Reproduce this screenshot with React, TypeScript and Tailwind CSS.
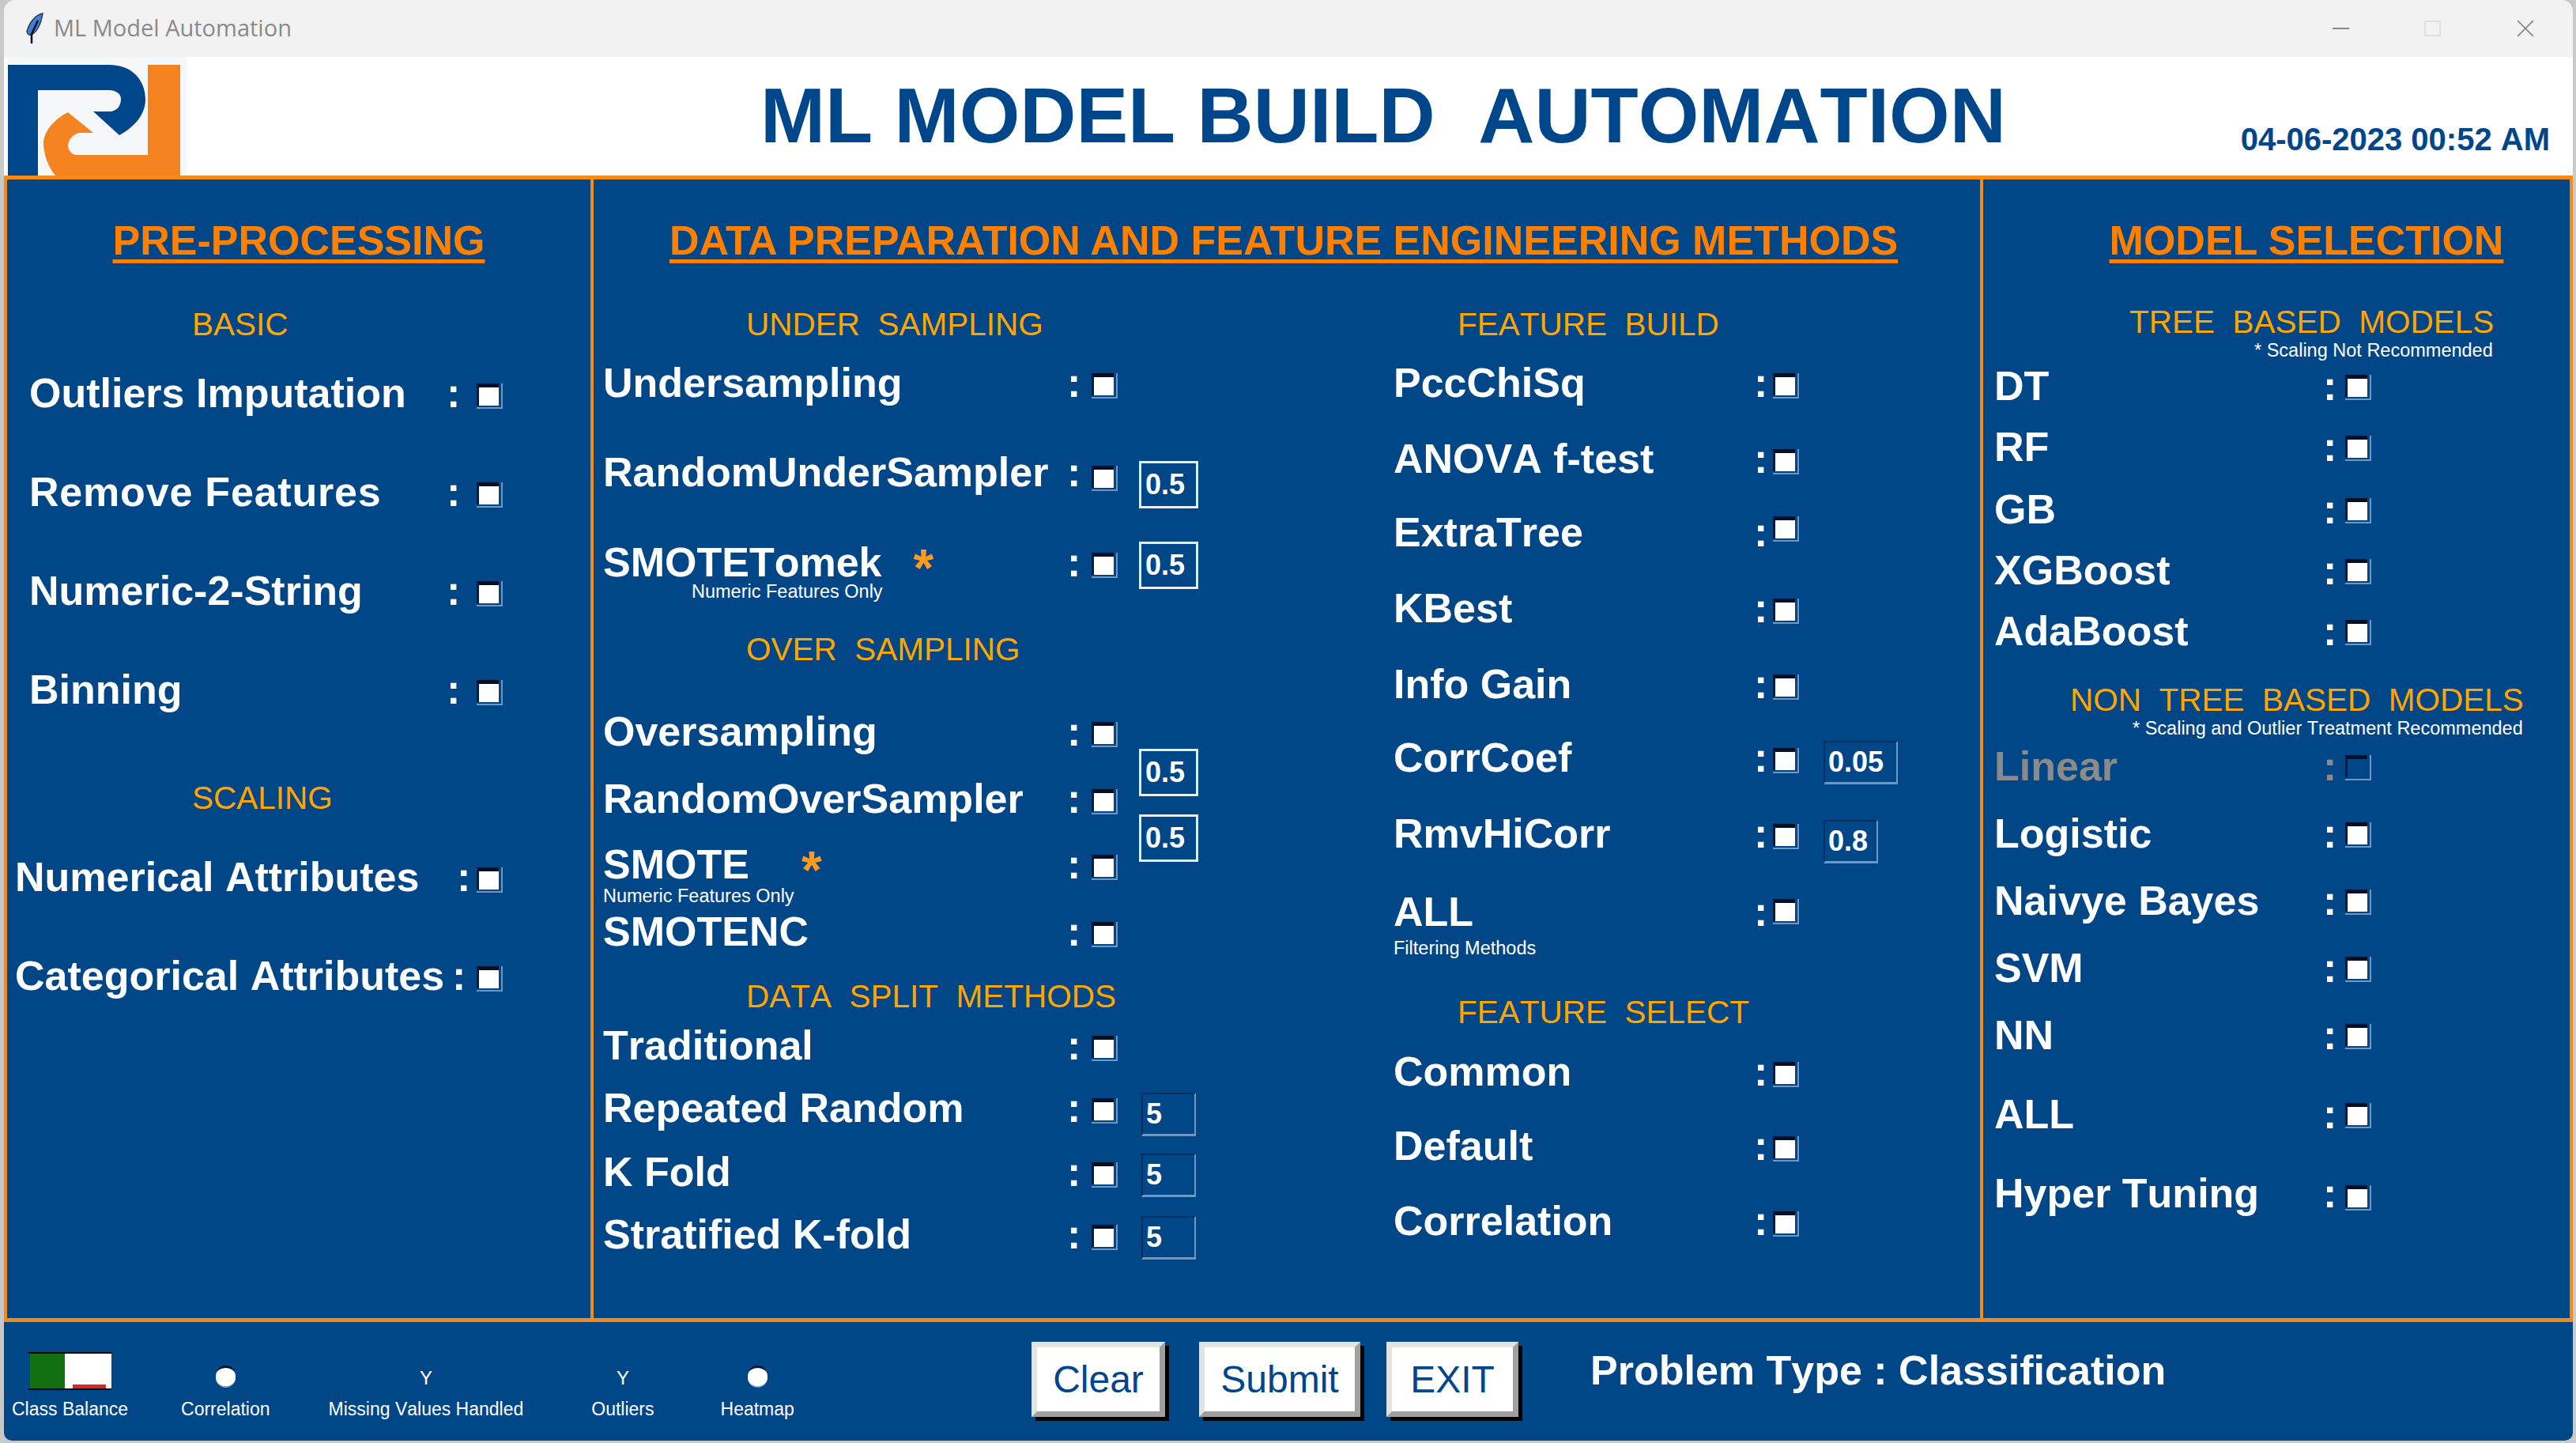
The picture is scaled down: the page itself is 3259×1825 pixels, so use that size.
import type { ReactNode } from "react";

const preLabel = "ml-[28px] w-[528px]";
const sampleLabel = "ml-[12px] w-[587px]";
const featureLabel = "ml-[12px] w-[456px]";
const modelLabel = "ml-[14px] w-[416px]";

const sampleCheck = "ml-[14px]";
const featureCheck = "ml-[7px]";
const modelCheck = "ml-[11px]";

const Check = ({ className, disabled }: { className?: string; disabled?: boolean }) => (
  <div className={`h-[32px] w-[33px] shrink-0 border-r-2 border-b-2 border-[#6f97c4] ${className ?? ""}`}>
    <div
      className={`h-[28px] w-[28px] border-t-[5px] border-l-[3px] border-t-[#020f24] border-l-[#021a3a] ${disabled ? "" : "bg-white"}`}
    />
  </div>
);

const BoxInput = ({ value, className }: { value: string; className?: string }) => (
  <div
    className={`flex h-[60px] w-[75px] shrink-0 items-center border-[3px] border-[#e8eef6] pl-[5px] text-[36px] font-bold text-white ${className ?? ""}`}
  >
    {value}
  </div>
);

const SunkenInput = ({ value, className }: { value: string; className?: string }) => (
  <div
    className={`flex h-[55px] shrink-0 items-center border-t-2 border-r-2 border-b-[3px] border-l-2 border-t-[#01305f] border-r-[#6f97c4] border-b-[#6f97c4] border-l-[#01305f] pl-[4px] text-[36px] font-bold text-white ${className ?? ""}`}
  >
    {value}
  </div>
);

const Row = ({
  label,
  className,
  labelClass,
  checkClass,
  nudge = "translate-y-[4px]",
  disabled,
  children,
}: {
  label: ReactNode;
  className?: string;
  labelClass: string;
  checkClass: string;
  nudge?: string;
  disabled?: boolean;
  children?: ReactNode;
}) => (
  <div className={`flex h-[60px] items-center text-[52px] font-bold ${disabled ? "text-[#8a8a8a]" : "text-white"} ${className ?? ""}`}>
    <div className={`shrink-0 whitespace-pre ${labelClass}`}>{label}</div>
    <div className="w-[17px] shrink-0">:</div>
    <Check className={`${checkClass} ${nudge}`} disabled={disabled} />
    {children}
  </div>
);

const Heading = ({ children, className }: { children: ReactNode; className?: string }) => (
  <div className={`flex h-[60px] items-center whitespace-pre text-[40.5px] text-[#ffa500] ${className ?? ""}`}>{children}</div>
);

const Note = ({ children, className }: { children: ReactNode; className?: string }) => (
  <div className={`h-[24px] whitespace-pre text-[23.5px] leading-[24px] text-white ${className ?? ""}`}>{children}</div>
);

const PanelTitle = ({ children, className }: { children: ReactNode; className?: string }) => (
  <div className={`flex h-[148px] items-center justify-center pt-[6px] [font-kerning:normal] ${className ?? ""}`}>
    <span className="text-[52px] font-bold text-[#ff8000] underline decoration-[5px] underline-offset-[6px]">{children}</span>
  </div>
);

const Star = ({ className }: { className: string }) => (
  <span className={`inline-block translate-y-[12px] text-[66px] leading-[40px] text-[#ff9a1f] ${className}`}>*</span>
);

const Logo = () => (
  <svg viewBox="0 0 226 150" className="ml-[5px] h-[150px] w-[226px] shrink-0">
    <rect width="226" height="150" fill="#f6f7f8" />
    <path d="M0 10H128C158 10 174 30 174 54C174 74 158 90 141 99L108 69H128C138 69 143 62 143 53C143 46 136 42 128 42H38V150H0Z" fill="#00468b" />
    <path d="M177 10H218V150H60C50 138 45 122 45 107C47 92 60 78 76 70L108 96H90C80 99 76 106 76 114C78 120 82 124 87 124H177Z" fill="#f58420" />
  </svg>
);

const Feather = () => (
  <svg viewBox="0 0 22 40" className="h-[40px] w-[22px]">
    <path d="M21 1C12 3 4 12 1 24C2 27 4 29 7 28C14 24 19 13 21 1Z" fill="#3f7fd6" stroke="#2a3a55" strokeWidth="1.5" />
    <path d="M15 10L7 27L7 39" fill="none" stroke="#0b0f18" strokeWidth="2.5" />
  </svg>
);

const Radio = () => (
  <div className="h-[28px] w-[25px] rounded-full border-t-[3px] border-b-2 border-t-[#04122a] border-b-[#7fa3cc] bg-white" />
);

const Indicator = ({ label, className, children }: { label: string; className: string; children: ReactNode }) => (
  <div className={`flex shrink-0 flex-col items-center ${className}`}>
    <div className="flex h-[56px] items-end justify-center pb-[7px]">{children}</div>
    <div className="mt-[6px] whitespace-pre text-[23px] leading-[28px] text-white">{label}</div>
  </div>
);

const BevelButton = ({ label, className }: { label: string; className: string }) => (
  <button
    className={`h-[95px] shrink-0 border-[7px] border-t-[#e3e3e3] border-r-[#a0a0a0] border-b-[#a0a0a0] border-l-[#e3e3e3] bg-white text-[48px] text-[#00468b] shadow-[5px_5px_0_#000] ${className}`}
  >
    {label}
  </button>
);

export default function App() {
  return (
    <div className="flex h-[1825px] w-[3259px] flex-col overflow-hidden bg-[#c9c9c9] pr-[4px] pb-[3px] pl-[5px] font-['Liberation_Sans',Arial,sans-serif] [font-kerning:none]">
      {/* title bar */}
      <div className="flex h-[72px] shrink-0 items-center rounded-t-[14px] bg-[#f2f2f2] pl-[28px]">
        <Feather />
        <span className="ml-[13px] -mt-[3px] font-['Open_Sans',sans-serif] text-[29px] text-[#8a8a8a]">ML Model Automation</span>
        <div className="ml-auto flex items-center pr-[50px]">
          <div className="h-[2px] w-[21px] bg-[#8a8a8a]" />
          <div className="ml-[95px] h-[20px] w-[21px] rounded-[2px] border-2 border-[#e0e0e0]" />
          <svg viewBox="0 0 20 20" className="ml-[97px] h-[20px] w-[20px]">
            <path d="M0 0L20 20M20 0L0 20" stroke="#777" strokeWidth="1.5" />
          </svg>
        </div>
      </div>

      {/* header */}
      <div className="flex h-[150px] shrink-0 items-center bg-white">
        <Logo />
        <div className="ml-[726px] whitespace-pre text-[98.5px] font-bold text-[#00468b]">ML MODEL BUILD  AUTOMATION</div>
        <div className="ml-auto mt-[58px] pr-[29px] text-[40px] font-bold text-[#00468b]">04-06-2023 00:52 AM</div>
      </div>

      {/* main panels */}
      <div className="flex h-[1450px] shrink-0 border-x-4 border-y-[5px] border-[#f58a14] bg-[#014687]">
        <div className="w-[738px] shrink-0">
          <PanelTitle>PRE-PROCESSING</PanelTitle>
          <Heading className="mt-[5px] ml-[234px]">BASIC</Heading>
          <Row className="mt-[27px]" label="Outliers Imputation" labelClass={preLabel} checkClass="ml-[21px]" />
          <Row className="mt-[65px]" label="Remove Features" labelClass={`${preLabel} tracking-[0.8px]`} checkClass="ml-[21px]" />
          <Row className="mt-[65px]" label="Numeric-2-String" labelClass={preLabel} checkClass="ml-[21px]" />
          <Row className="mt-[65px]" label="Binning" labelClass={preLabel} checkClass="ml-[21px]" />
          <Heading className="mt-[77px] ml-[234px]">SCALING</Heading>
          <Row className="mt-[40px]" label="Numerical Attributes" labelClass="ml-[10px] w-[559px]" checkClass="ml-[8px]" />
          <Row className="mt-[65px]" label="Categorical Attributes" labelClass="ml-[10px] w-[553px]" checkClass="ml-[14px]" />
        </div>

        <div className="w-[1762px] shrink-0 border-x-4 border-[#f58a14]">
          <PanelTitle className="pr-[8px]">DATA PREPARATION AND FEATURE ENGINEERING METHODS</PanelTitle>
          <div className="flex">
            <div className="w-[1000px] shrink-0">
              <Heading className="mt-[5px] ml-[193px]">UNDER  SAMPLING</Heading>
              <Row className="mt-[14px]" label="Undersampling" labelClass={sampleLabel} checkClass={sampleCheck} />
              <Row className="mt-[53px]" label="RandomUnderSampler" labelClass={sampleLabel} checkClass={sampleCheck} nudge="translate-y-[8px]">
                <BoxInput value="0.5" className="ml-[27px] translate-y-[16px]" />
              </Row>
              <Row
                className="mt-[54px]"
                label={<>SMOTETomek<Star className="ml-[40px]" /></>}
                labelClass={sampleLabel}
                checkClass={sampleCheck}
              >
                <BoxInput value="0.5" className="ml-[27px] translate-y-[4px]" />
              </Row>
              <Note className="-mt-[5px] ml-[124px]">Numeric Features Only</Note>
              <Heading className="mt-[31px] ml-[193px]">OVER  SAMPLING</Heading>
              <Row className="mt-[44px]" label="Oversampling" labelClass={sampleLabel} checkClass={sampleCheck} />
              <Row className="mt-[25px]" label="RandomOverSampler" labelClass={sampleLabel} checkClass={sampleCheck}>
                <BoxInput value="0.5" className="ml-[27px] -translate-y-[33px]" />
              </Row>
              <Row
                className="mt-[23px]"
                label={<>SMOTE<Star className="ml-[66px]" /></>}
                labelClass={sampleLabel}
                checkClass={sampleCheck}
              >
                <BoxInput value="0.5" className="ml-[27px] -translate-y-[33px]" />
              </Row>
              <Note className="-mt-[2px] ml-[12px]">Numeric Features Only</Note>
              <Row className="mt-[3px]" label="SMOTENC" labelClass={sampleLabel} checkClass={sampleCheck} />
              <Heading className="mt-[22px] ml-[193px]">DATA  SPLIT  METHODS</Heading>
              <Row className="mt-[2px]" label="Traditional" labelClass={sampleLabel} checkClass={sampleCheck} />
              <Row className="mt-[19px]" label="Repeated Random" labelClass={sampleLabel} checkClass={sampleCheck}>
                <SunkenInput value="5" className="ml-[30px] w-[69px] translate-y-[8px]" />
              </Row>
              <Row className="mt-[21px]" label="K Fold" labelClass={sampleLabel} checkClass={sampleCheck}>
                <SunkenInput value="5" className="ml-[30px] w-[69px] translate-y-[4px]" />
              </Row>
              <Row className="mt-[19px]" label="Stratified K-fold" labelClass={sampleLabel} checkClass={sampleCheck}>
                <SunkenInput value="5" className="ml-[30px] w-[69px] translate-y-[4px]" />
              </Row>
            </div>

            <div className="min-w-0 flex-1">
              <Heading className="mt-[5px] ml-[93px]">FEATURE  BUILD</Heading>
              <Row className="mt-[14px]" label="PccChiSq" labelClass={featureLabel} checkClass={featureCheck} />
              <Row className="mt-[36px]" label="ANOVA f-test" labelClass={featureLabel} checkClass={featureCheck} />
              <Row className="mt-[33px]" label="ExtraTree" labelClass={featureLabel} checkClass={featureCheck} nudge="-translate-y-[4px]" />
              <Row className="mt-[36px]" label="KBest" labelClass={featureLabel} checkClass={featureCheck} />
              <Row className="mt-[36px]" label="Info Gain" labelClass={featureLabel} checkClass={featureCheck} />
              <Row className="mt-[33px]" label="CorrCoef" labelClass={featureLabel} checkClass={featureCheck}>
                <SunkenInput value="0.05" className="ml-[31px] w-[94px] translate-y-[6px]" />
              </Row>
              <Row className="mt-[36px]" label="RmvHiCorr" labelClass={featureLabel} checkClass={featureCheck}>
                <SunkenInput value="0.8" className="ml-[31px] w-[69px] translate-y-[10px]" />
              </Row>
              <Row className="mt-[39px]" label="ALL" labelClass={featureLabel} checkClass={featureCheck} nudge="translate-y-0" />
              <Note className="mt-[4px] ml-[12px]">Filtering Methods</Note>
              <Heading className="mt-[39px] ml-[93px]">FEATURE  SELECT</Heading>
              <Row className="mt-[15px]" label="Common" labelClass={featureLabel} checkClass={featureCheck} />
              <Row className="mt-[34px]" label="Default" labelClass={featureLabel} checkClass={featureCheck} />
              <Row className="mt-[35px]" label="Correlation" labelClass={featureLabel} checkClass={featureCheck} />
            </div>
          </div>
        </div>

        <div className="min-w-0 flex-1">
          <PanelTitle className="pl-[76px]">MODEL SELECTION</PanelTitle>
          <Heading className="mt-[2px] ml-[185px]">TREE  BASED  MODELS</Heading>
          <Note className="-mt-[6px] ml-[343px]">* Scaling Not Recommended</Note>
          <Row className="mt-[3px]" label="DT" labelClass={modelLabel} checkClass={modelCheck} nudge="translate-y-[2px]" />
          <Row className="mt-[17px]" label="RF" labelClass={modelLabel} checkClass={modelCheck} nudge="translate-y-[2px]" />
          <Row className="mt-[19px]" label="GB" labelClass={modelLabel} checkClass={modelCheck} nudge="translate-y-[2px]" />
          <Row className="mt-[17px]" label="XGBoost" labelClass={modelLabel} checkClass={modelCheck} nudge="translate-y-[2px]" />
          <Row className="mt-[17px]" label="AdaBoost" labelClass={modelLabel} checkClass={modelCheck} nudge="translate-y-[2px]" />
          <Heading className="mt-[27px] ml-[110px]">NON  TREE  BASED  MODELS</Heading>
          <Note className="-mt-[6px] ml-[189px]">* Scaling and Outlier Treatment Recommended</Note>
          <Row className="mt-[6px]" label="Linear" labelClass={modelLabel} checkClass={modelCheck} nudge="translate-y-[2px]" disabled />
          <Row className="mt-[25px]" label="Logistic" labelClass={modelLabel} checkClass={modelCheck} nudge="translate-y-[2px]" />
          <Row className="mt-[25px]" label="Naivye Bayes" labelClass={modelLabel} checkClass={modelCheck} nudge="translate-y-[2px]" />
          <Row className="mt-[25px]" label="SVM" labelClass={modelLabel} checkClass={modelCheck} nudge="translate-y-[2px]" />
          <Row className="mt-[25px]" label="NN" labelClass={modelLabel} checkClass={modelCheck} nudge="translate-y-[2px]" />
          <Row className="mt-[40px]" label="ALL" labelClass={modelLabel} checkClass={modelCheck} nudge="translate-y-[2px]" />
          <Row className="mt-[40px]" label="Hyper Tuning" labelClass={modelLabel} checkClass={modelCheck} nudge="translate-y-[6px]" />
        </div>
      </div>

      {/* status bar */}
      <div className="flex h-[150px] shrink-0 items-start rounded-b-[10px] bg-[#014687] pt-[25px]">
        <div className="mt-[9px] flex w-[1000px] shrink-0">
          <Indicator label="Class Balance" className="ml-[10px]">
            <div className="relative mb-[-3px] flex h-[48px] w-[105px] border-y-2 border-[#0a0a0a]">
              <div className="ml-[2px] w-[44px] bg-[#127012]" />
              <div className="flex-1 bg-white" />
              <div className="absolute right-[7px] bottom-0 h-[5px] w-[42px] bg-[#d9262c]" />
            </div>
          </Indicator>
          <Indicator label="Correlation" className="ml-[67px]">
            <Radio />
          </Indicator>
          <Indicator label="Missing Values Handled" className="ml-[74px]">
            <span className="text-[24px] leading-[24px] text-white">Y</span>
          </Indicator>
          <Indicator label="Outliers" className="ml-[86px]">
            <span className="text-[24px] leading-[24px] text-white">Y</span>
          </Indicator>
          <Indicator label="Heatmap" className="ml-[84px]">
            <Radio />
          </Indicator>
        </div>
        <BevelButton label="Clear" className="ml-[300px] w-[169px]" />
        <BevelButton label="Submit" className="ml-[43px] w-[204px]" />
        <BevelButton label="EXIT" className="ml-[33px] w-[167px]" />
        <div className="ml-[91px] mt-[6px] whitespace-pre text-[52px] leading-[60px] font-bold text-white">Problem Type : Classification</div>
      </div>
    </div>
  );
}
